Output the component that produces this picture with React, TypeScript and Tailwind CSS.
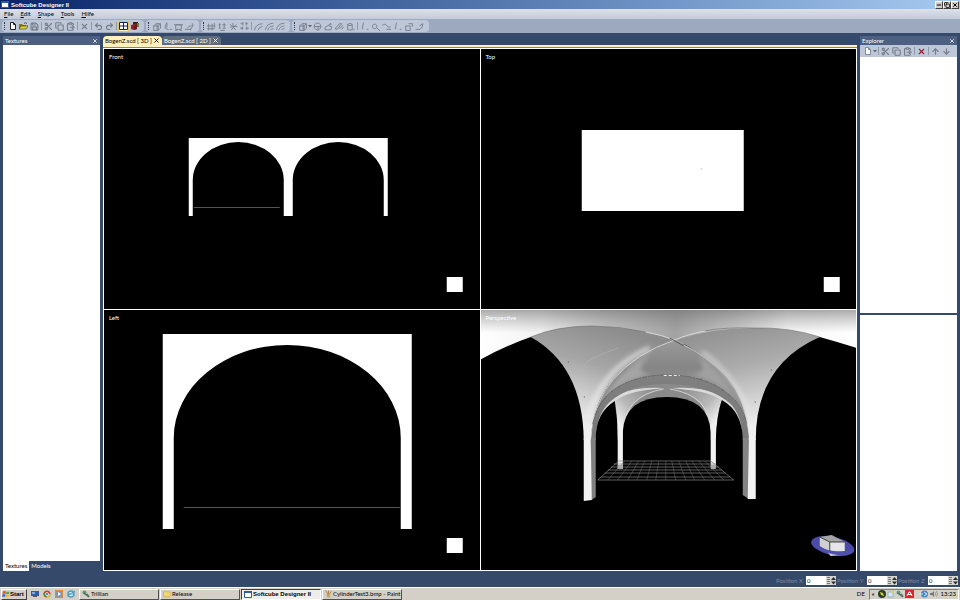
import React, { useState } from 'react';
import { ArrowDown, ArrowUp, ClipboardPaste, Copy, Folder, Minus, Redo2, Save, Scissors, Undo2, X } from 'lucide-react';
import type { LucideIcon } from 'lucide-react';

const glyphs = {
    cube: 'M1.500 3.500h4v4h-4zM1.500 3.500l2-2h4v4l-2 2M5.500 3.500l2-2M4.500 2v5',
    pen: 'M3.500.5L2 3.500v2l3 1.500M3.500 1v4M6 6.500h2',
    frame: 'M1.500 2.500h5v4h-5zM0 2.500h8M1 7.500h2M5 7.500h2',
    sweep: 'M0 6.500h5l2.500-4M2 5.500l2-2h2M6.500 1v2M5 6v1.500',
    snap: 'M1.500 1.500v6M4.500 1.500v6M0 3.500h7.500M0 6h7M6.500 1v4',
    grid: 'M.5 2.500h2M4 2.500h3M1.500 1v4M5.500 1v4M.5 5.500h2M4 5.500h3M2 7.500h4',
    star: 'M1 2l5 5M6.500 2L2 7M3.500 1v3h4M1 4.500h2',
    align: 'M.5 1.500h2M5 1.500h2M2.500 0v3M5.500 0v3M0 5.500h3M5 5.500h3M2 4v3M6 4v3',
    arc: 'M.5 7.500Q1 2 7.500 1.500M3.500 7.500Q4 4.500 7.500 4',
    arcs: 'M.5 7Q1 1.500 7.500 1M2.500 7.500Q3 4 7.500 3.500M5 7Q5 6 7.500 6',
    sphere: 'M4 1a3 3 0 1 0 .1 0M1 4h6M4.500 4v3.500',
    wedge: 'M1 4.500l3-1.500 3 1.500-1 2.500H1zM4 3l2-2v2',
    tube: 'M0 6l4-4.500h2L2 6.500zM4 6l3-3M6 6.500l1.500-2',
    cylinder: 'M1.500 2v5h4V2M1.500 2q2-1.500 4 0M1.500 2.500q2 1.500 4 0M7 6v1.500',
    line: 'M3 .5L2 6.500M6 6.500h1.500',
    lens: 'M2.500 2a2 2 0 1 0 1.500 0zM5 5l2 2M7 7.500h1',
    wave: 'M0 3q3-2 4 0t3.500 1.500M4 6.500h4',
    extrude: 'M1.500 3.500h4v4h-4zM4 1.500h3.500V4',
    bend: 'M.5 6.500h4Q7 5 7 1.500L4 3.500',
};

interface ToolProps {
    label: string;
    icon?: LucideIcon;
    glyph?: keyof typeof glyphs;
    active?: boolean;
    children?: React.ReactNode;
    color?: string;
}

const Tool: React.FC<ToolProps> = ({ label, icon: Icon, glyph, active, children, color = 'text-[#767c8a]' }) => (
    <button
        type="button"
        aria-label={label}
        className={`flex h-[11px] w-[11px] shrink-0 items-center justify-center ${color} ${active ? 'border border-[#e5c365] bg-[#fff3cf]' : ''}`}
    >
        {Icon && <Icon size={9} strokeWidth={3} />}
        {glyph && (
            <svg width="9" height="9" viewBox="0 0 8 8" fill="none" stroke="currentColor" strokeWidth=".8">
                <path d={glyphs[glyph]} />
            </svg>
        )}
        {children}
    </button>
);

const Sep = () => <span className="mx-px h-2 w-px shrink-0 bg-[#8f99ac]" />;

const DropArrow = () => (
    <svg width="4" height="3" viewBox="0 0 4 3" className="shrink-0" aria-hidden="true">
        <path d="M0 0h4L2 2.500z" fill="#5d6472" />
    </svg>
);

const ToolGroup: React.FC<{ label: string; children: React.ReactNode }> = ({ label, children }) => (
    <div role="toolbar" aria-label={label} className="flex h-3 items-center rounded-sm bg-[#bec7d8] pr-1">
        <span className="mx-0.5 h-2 w-0 border-l border-dotted border-[#28344c]" />
        {children}
    </div>
);

const PageIcon = ({ color }: { color: string }) => (
    <svg width="8" height="8" viewBox="0 0 8 8" fill="#fff" stroke={color}>
        <path d="M1.5.5h3l2 2v5h-5zM4.5.5v2h2" />
    </svg>
);

const OpenIcon = () => (
    <svg width="9" height="8" viewBox="0 0 9 8">
        <path d="M0 2h3l1 1h3v4H0z" fill="#8a7d16" />
        <path d="M2 4h7L7 7H0z" fill="#e7d838" stroke="#37340a" strokeWidth=".6" />
        <path d="M5 1.5q1.5-1.5 3 0" fill="none" stroke="#222" strokeWidth=".7" />
    </svg>
);

const FourViewIcon = () => (
    <svg width="9" height="8" viewBox="0 0 9 8" className="shrink-0">
        <path d="M.5.5h8v7h-8zM4.5.5v7M.5 4h8" fill="#fff" stroke="#16205e" />
    </svg>
);

const RenderIcon = () => (
    <svg width="8" height="8" viewBox="0 0 8 8">
        <path d="M2 0h5v5H2z" fill="#3d2322" />
        <path d="M0 3l4-1 2 1v4l-3 1-3-1z" fill="#9c1c28" />
        <path d="M3 4l3-1v4L3 8z" fill="#651820" />
        <path d="M6 1h2v4H6z" fill="#6f7c34" />
    </svg>
);

const WindowIcon = () => (
    <svg width="8" height="7" viewBox="0 0 8 7" className="shrink-0">
        <path d="M.5.5h7v6h-7z" fill="#fff" stroke="#315aa5" />
        <path d="M0 0h8v2H0z" fill="#315aa5" />
    </svg>
);

const PanelHeader = ({ title }: { title: string }) => (
    <div className="flex h-[9px] shrink-0 items-center justify-between bg-[#4d6082] px-0.5 text-white">
        <h2>{title}</h2>
        <button type="button" aria-label={`Close ${title}`}><X size={6} strokeWidth={3} /></button>
    </div>
);

interface ViewProps {
    title: string;
    viewBox: string;
    children: React.ReactNode;
}

const Viewport: React.FC<ViewProps> = ({ title, viewBox, children }) => (
    <section className="relative min-h-0 min-w-0 overflow-hidden bg-black">
        <svg viewBox={viewBox} preserveAspectRatio="xMidYMid slice" className="absolute inset-0 h-full w-full" aria-hidden="true">
            {children}
        </svg>
        <h3 className="absolute left-[5px] top-1 text-white">{title}</h3>
    </section>
);

const VaultScene = () => (
    <>
        <defs>
            <linearGradient id="ceiling" x1="481" x2="856" y1="0" y2="0" gradientUnits="userSpaceOnUse">
                <stop offset="0" stopColor="#ffffff" />
                <stop offset=".16" stopColor="#f2f2f2" />
                <stop offset=".34" stopColor="#c4c4c4" />
                <stop offset=".52" stopColor="#a2a2a2" />
                <stop offset=".68" stopColor="#c8c8c8" />
                <stop offset=".82" stopColor="#f6f6f6" />
                <stop offset="1" stopColor="#ffffff" />
            </linearGradient>
            <linearGradient id="shade" x1="0" x2="0" y1="310" y2="333" gradientUnits="userSpaceOnUse">
                <stop offset="0" stopColor="#666" stopOpacity=".55" />
                <stop offset="1" stopColor="#888" stopOpacity="0" />
            </linearGradient>
            <linearGradient id="vaultL" x1="610" x2="580" y1="326" y2="425" gradientUnits="userSpaceOnUse">
                <stop offset="0" stopColor="#8c8c8c" />
                <stop offset=".4" stopColor="#a6a6a6" />
                <stop offset=".7" stopColor="#cecece" />
                <stop offset="1" stopColor="#f0f0f0" />
            </linearGradient>
            <linearGradient id="vaultR" x1="735" x2="758" y1="326" y2="425" gradientUnits="userSpaceOnUse">
                <stop offset="0" stopColor="#929292" />
                <stop offset=".4" stopColor="#acacac" />
                <stop offset=".7" stopColor="#cecece" />
                <stop offset="1" stopColor="#f0f0f0" />
            </linearGradient>
            <linearGradient id="inner" x1="0" x2="0" y1="340" y2="385" gradientUnits="userSpaceOnUse">
                <stop offset="0" stopColor="#9a9a9a" />
                <stop offset=".6" stopColor="#868686" />
                <stop offset="1" stopColor="#8c8c8c" />
            </linearGradient>
            <linearGradient id="band" x1="0" x2="0" y1="375" y2="430" gradientUnits="userSpaceOnUse">
                <stop offset="0" stopColor="#808080" />
                <stop offset="1" stopColor="#7a7a7a" />
            </linearGradient>
            <linearGradient id="backL" x1="650" x2="616" y1="388" y2="420" gradientUnits="userSpaceOnUse">
                <stop offset="0" stopColor="#8e8e8e" />
                <stop offset=".6" stopColor="#b8b8b8" />
                <stop offset="1" stopColor="#f2f2f2" />
            </linearGradient>
            <linearGradient id="backR" x1="684" x2="718" y1="388" y2="420" gradientUnits="userSpaceOnUse">
                <stop offset="0" stopColor="#8e8e8e" />
                <stop offset=".6" stopColor="#b8b8b8" />
                <stop offset="1" stopColor="#f2f2f2" />
            </linearGradient>
            <filter id="soft" x="-20%" y="-20%" width="140%" height="140%">
                <feGaussianBlur stdDeviation="2" />
            </filter>
        </defs>

        {/* ceiling in front of the first bay */}
        <path d="M480 309H857V348Q838 342 820 337L673 345L531 337Q505 346 480 360Z" fill="url(#ceiling)" />
        <path d="M480 309H857V348Q838 342 820 337L673 345L531 337Q505 346 480 360Z" fill="url(#shade)" />

        {/* middle bay */}
        <path d="M675 340Q636 352 613 380Q592 405 591 440H596L640 402H700L743 440H749Q748 400 727 377Q703 352 675 340Z" fill="url(#inner)" />
        <path d="M650 354Q626 366 612 387Q602 400 596 416Q608 392 626 383Q642 376 655 374Q630 376 650 354Z" fill="#b8b8b8" opacity=".6" filter="url(#soft)" />
        <path d="M698 356Q716 366 727 384Q738 400 745 416Q732 392 714 383Q698 376 685 374Q712 376 698 356Z" fill="#b8b8b8" opacity=".5" filter="url(#soft)" />

        {/* side vaults */}
        <path d="M531 337Q557 326 592 326Q636 327 675 340Q636 354 613 380Q593 402 591 440H584Q583 366 531 337Z" fill="url(#vaultL)" />
        <path d="M820 337Q790 327 753 328Q712 328 677 340Q703 353 727 377Q747 400 749 440H756Q756 365 820 337Z" fill="url(#vaultR)" />
        <path d="M650 348Q622 360 606 381Q593 398 588 420" fill="none" stroke="#ececec" strokeWidth="5" opacity=".65" filter="url(#soft)" />
        <path d="M702 352Q718 362 731 380Q746 398 752 420" fill="none" stroke="#e8e8e8" strokeWidth="5" opacity=".5" filter="url(#soft)" />
        <path d="M578 378Q580 366 592 359Q604 353 618 348" fill="none" stroke="#b8b8b8" opacity=".5" />
        <path d="M531 337Q557 326 592 326Q620 326 646 332M704 331Q726 327 753 328Q790 327 820 337" fill="none" stroke="#6c6c6c" strokeWidth=".6" />
        <path d="M646 332Q662 335 675 340Q688 334 706 331" fill="none" stroke="#d6d6d6" strokeWidth="1" />
        <path d="M675 340Q636 353 613 380Q594 402 591 438" fill="none" stroke="#dedede" strokeWidth=".8" />
        <path d="M670 338L684 346" stroke="#444" strokeWidth=".8" />
        <path d="M684 345Q707 356 727 377Q747 401 749 435" fill="none" stroke="#d0d0d0" strokeWidth=".8" />

        {/* rear bay shell, bright ribs run along its upper edge */}
        <path d="M596 440Q596 423 601 417Q620 386 667 385Q722 386 738 414Q743 425 743 440H711L623 440Z" fill="#8a8a8a" />
        <path d="M596 434Q599 406 617 395Q636 386 664 388Q636 391 618 401Q606 410 598 430Z" fill="#dadada" />
        <path d="M743 434Q740 406 720 395Q701 386 672 388Q703 392 719 401Q733 410 742 430Z" fill="#dadada" />
        <path d="M615 401Q632 389 664 389Q645 393 634 404Q625 414 623 440V467H618V440Q618 415 615 401Z" fill="url(#backL)" />
        <path d="M722 400Q705 389 670 389Q690 393 701 404Q709 414 711 440V467H716V440Q717 415 722 400Z" fill="url(#backR)" />
        <path d="M664 389Q645 392 634 403Q627 411 624 422M670 389Q690 392 701 403Q708 411 711 422" fill="none" stroke="#dcdcdc" strokeWidth=".8" />

        {/* transverse arch between the bays */}
        <path d="M592 440Q592 410 606 396Q628 375 667 375Q712 375 735 400Q748 415 749 440H743Q743 417 732 405Q711 385 667 384Q630 384 610 402Q596 415 596 440Z" fill="url(#band)" />
        <path d="M593 424Q598 404 610 393Q632 375 667 375Q708 375 732 397Q744 408 747 424" fill="none" stroke="#5c5c5c" strokeWidth=".7" strokeDasharray="5 1 2 1" />
        <path d="M664 375.500H680" stroke="#eee" strokeDasharray="3 2" />

        {/* openings */}
        <path d="M596 500V438Q596 413 615 401Q618 420 618 440V468L600 500Z" fill="#000" />
        <path d="M743 496V438Q742 411 722 400Q717 415 716 440V467L740 496Z" fill="#000" />
        <path d="M623 470V432Q625 397 667 397Q709 397 711 432V470Z" fill="#000" />
        <path d="M618 425H623V469H618ZM711 425H716V467H711Z" fill="#f2f2f2" />

        {/* ground grid */}
        <path d="M619 461H711L734 480H598ZM614 464H716M611 467H719M608 470H722M605 473H726M601 477H730" fill="none" stroke="#858585" strokeWidth=".7" />
        <path d="M625 461L608 480M632 461L618 480M639 461L628 480M645 461L637 480M652 461L647 480M659 461L656 480M666 461V480M672 461L676 480M679 461L686 480M686 461L695 480M692 461L705 480M699 461L715 480M705 461L724 480" stroke="#707070" strokeWidth=".5" />
        <path d="M618 465H623V469H618ZM711 465H716V469H711Z" fill="#aaa" />

        {/* front pillars */}
        <path d="M591 438H596V497L592 500H591Z" fill="#808080" />
        <path d="M584 438H591L592 500L584 501Z" fill="#f2f2f2" />
        <path d="M743 438H749V499L743 495Z" fill="#838383" />
        <path d="M749 438H756V499H748Z" fill="#f2f2f2" />
        <path d="M568 362h1M584 397h1M771 370h1M755 402h1M701 379h1" stroke="#444" />

        {/* orientation gizmo */}
        <ellipse cx="833" cy="546" rx="22" ry="9" transform="rotate(12 833 546)" fill="#4a4aa8" />
        <path d="M824 548L845 550L842 555L831 556Z" fill="#d6d6e2" />
        <path d="M820 537L832 535L845 542L830 544Z" fill="#a5a5a5" />
        <path d="M820 537L830 542V552L820 546Z" fill="#cfcfcf" />
        <path d="M830 542L845 542V551L830 552Z" fill="#e5e5e5" />
        <path d="M820 537L830 542V552M830 542L845 542" fill="none" stroke="#222" strokeWidth=".8" />
        <path d="M812 541Q820 549 834 551Q848 552 854 549Q852 557 838 555Q817 552 812 541Z" fill="#5050ae" />
    </>
);

const TaskButton: React.FC<{ label: string; active?: boolean; children: React.ReactNode }> = ({ label, active, children }) => (
    <button
        type="button"
        className={`flex h-[11px] w-20 items-center gap-px border px-0.5 text-left ${
            active
                ? "border-b-white border-l-[#404040] border-r-white border-t-[#404040] bg-[#f0eeea] font-['Liberation_Sans',sans-serif] font-bold"
                : 'border-b-[#505050] border-l-white border-r-[#505050] border-t-white bg-[#d4d0c8]'
        }`}
    >
        {children}
        <span className="whitespace-nowrap">{label}</span>
    </button>
);

const PositionField = ({ axis }: { axis: string }) => {
    const [value, setValue] = useState('0');
    return (
        <div className="flex items-center">
            <label htmlFor={`position-${axis}`} className="w-[30px] whitespace-nowrap text-[#7d8aa3]">Position {axis}</label>
            <input
                id={`position-${axis}`}
                value={value}
                onChange={(e) => setValue(e.target.value)}
                className="h-[9px] w-5 bg-white px-px text-[#222] outline-none"
            />
            <svg width="10" height="9" viewBox="0 0 10 9" aria-hidden="true">
                <path d="M0 0h10v9H0z" fill="#d8d6d0" />
                <path d="M1 1.500h3M1 3.500h3M1 5.500h3M1 7.500h3" stroke="#777" />
                <path d="M5 4l2.500-3L10 4zM5 5.500h5l-2.500 3z" fill="#2b2b2b" />
            </svg>
        </div>
    );
};

const menus = ['File', 'Edit', 'Shape', 'Tools', 'Hilfe'];
const documents = ['BogenZ.scd [ 3D ]', 'BogenZ.scd [ 2D ]'];

export default function App() {
    const [activeDoc, setActiveDoc] = useState(0);
    const [activePanel, setActivePanel] = useState('Textures');

    return (
        <div className="flex h-screen flex-col overflow-hidden bg-[#35496a] font-['Lato','Liberation_Sans',sans-serif] text-[6px] leading-[8px] text-black">
            <header className="flex h-[9px] shrink-0 items-center gap-0.5 bg-gradient-to-r from-[#0a246a] to-[#a6caf0] px-px">
                <WindowIcon />
                <h1 className="font-['Liberation_Sans',sans-serif] font-bold text-white">Softcube Designer II</h1>
                <div className="ml-auto flex">
                    {['Minimize', 'Restore', 'Close'].map((name) => (
                        <button key={name} type="button" aria-label={name} className="flex h-2 w-2 items-center justify-center border border-b-[#404040] border-l-white border-r-[#404040] border-t-white bg-[#d4d0c8]">
                            {name === 'Minimize' && <Minus size={6} strokeWidth={4} />}
                            {name === 'Restore' && <Copy size={6} strokeWidth={3} />}
                            {name === 'Close' && <X size={6} strokeWidth={4} />}
                        </button>
                    ))}
                </div>
            </header>

            <nav className="flex h-[10px] shrink-0 items-center gap-[7px] bg-gradient-to-b from-[#dde1ea] to-[#c3cad9] px-1">
                {menus.map((menu) => (
                    <button key={menu} type="button"><u>{menu[0]}</u>{menu.slice(1)}</button>
                ))}
            </nav>

            <div className="flex h-[14px] shrink-0 items-center gap-0.5 bg-[#9ca9bf] px-0.5">
                <ToolGroup label="Standard">
                    <Tool label="New"><PageIcon color="#222" /></Tool>
                    <Tool label="Open"><OpenIcon /></Tool>
                    <Tool label="Save" icon={Save} />
                    <Sep />
                    <Tool label="Cut" icon={Scissors} />
                    <Tool label="Copy" icon={Copy} />
                    <Tool label="Paste" icon={ClipboardPaste} />
                    <Sep />
                    <Tool label="Delete" icon={X} />
                    <Sep />
                    <Tool label="Undo" icon={Undo2} />
                    <Tool label="Redo" icon={Redo2} />
                    <Sep />
                    <Tool label="Four views" active><FourViewIcon /></Tool>
                    <Tool label="Render"><RenderIcon /></Tool>
                </ToolGroup>
                <ToolGroup label="Transform">
                    <Tool label="Solid" glyph="cube" />
                    <Tool label="Profile" glyph="pen" />
                    <Tool label="Frame" glyph="frame" />
                    <Tool label="Surface" glyph="sweep" />
                </ToolGroup>
                <ToolGroup label="Arrange">
                    <Tool label="Snap" glyph="snap" />
                    <Tool label="Grid" glyph="grid" />
                    <Tool label="Points" glyph="star" />
                    <Tool label="Align" glyph="align" />
                    <Sep />
                    <Tool label="Arc" glyph="arc" />
                    <Tool label="Double arc" glyph="arcs" />
                    <Tool label="Vault" glyph="arcs" />
                </ToolGroup>
                <ToolGroup label="Shapes">
                    <Tool label="Box" glyph="cube" />
                    <DropArrow />
                    <Tool label="Sphere" glyph="sphere" />
                    <Tool label="Wedge" glyph="wedge" />
                    <Tool label="Sweep" glyph="tube" />
                    <Tool label="Cylinder" glyph="cylinder" />
                    <Sep />
                    <Tool label="Line" glyph="line" />
                    <Tool label="Curve" glyph="lens" />
                    <Tool label="Wave" glyph="wave" />
                    <Tool label="Segment" glyph="line" />
                    <Tool label="Extrude" glyph="extrude" />
                    <Tool label="Bend" glyph="bend" />
                </ToolGroup>
            </div>

            <main className="flex min-h-0 flex-1 gap-[3px] px-[3px] pb-[3px] pt-[3px]">
                <aside className="flex w-[97px] shrink-0 flex-col">
                    <PanelHeader title="Textures" />
                    <div className="flex-1 bg-white" />
                    <div className="flex h-[10px] shrink-0">
                        {['Textures', 'Models'].map((panel) => (
                            <button
                                key={panel}
                                type="button"
                                onClick={() => setActivePanel(panel)}
                                className={`px-0.5 ${activePanel === panel ? 'bg-white text-black' : 'text-white'}`}
                            >
                                {panel}
                            </button>
                        ))}
                    </div>
                </aside>

                <div className="flex min-w-0 flex-1 flex-col">
                    <div className="flex h-[9px] shrink-0">
                        {documents.map((doc, i) => (
                            <div
                                key={doc}
                                className={`flex w-[59px] items-center justify-between rounded-t-sm px-0.5 ${
                                    i === activeDoc ? 'bg-[#fff0bd] text-black' : 'bg-[#5f6c7c] text-white'
                                }`}
                            >
                                <button type="button" onClick={() => setActiveDoc(i)} className="whitespace-nowrap">{doc}</button>
                                <button type="button" aria-label={`Close ${doc}`}><X size={7} strokeWidth={3} /></button>
                            </div>
                        ))}
                    </div>
                    <div className="h-[3px] shrink-0 border-b border-[#8b8a5c] bg-[#fff0bd]" />
                    <div className="grid min-h-0 flex-1 grid-cols-2 grid-rows-2 gap-px bg-white p-px">
                        <Viewport title="Front" viewBox="104 49 376 260">
                            <path d="M189 138H388V216H384V180A45.500 38 0 0 0 293 180V216H284V180A45.500 38 0 0 0 193 180V216H189Z" fill="#fff" />
                            <path d="M194 207.500H280" stroke="#555" />
                            <path d="M447 277h16v15h-16z" fill="#fff" />
                        </Viewport>
                        <Viewport title="Top" viewBox="481 49 376 260">
                            <path d="M582 130H744V211H582Z" fill="#fff" />
                            <path d="M701 169h1" stroke="#999" />
                            <path d="M824 277h16v15h-16z" fill="#fff" />
                        </Viewport>
                        <Viewport title="Left" viewBox="104 310 376 260">
                            <path d="M163 334H412V529H401V438A113.500 93 0 0 0 174 438V529H163Z" fill="#fff" />
                            <path d="M184 507.500H400" stroke="#555" />
                            <path d="M447 538h16v15h-16z" fill="#fff" />
                        </Viewport>
                        <Viewport title="Perspective" viewBox="481 310 376 260">
                            <VaultScene />
                        </Viewport>
                    </div>
                </div>

                <aside className="flex w-[97px] shrink-0 flex-col">
                    <PanelHeader title="Explorer" />
                    <div className="flex h-3 shrink-0 items-center bg-[#bec7d8] pl-0.5">
                        <Tool label="New item"><PageIcon color="#858b98" /></Tool>
                        <DropArrow />
                        <Sep />
                        <Tool label="Cut item" icon={Scissors} />
                        <Tool label="Copy item" icon={Copy} />
                        <Tool label="Paste item" icon={ClipboardPaste} />
                        <Sep />
                        <Tool label="Delete item" icon={X} color="text-[#941c2e]" />
                        <Sep />
                        <Tool label="Move up" icon={ArrowUp} />
                        <Tool label="Move down" icon={ArrowDown} />
                    </div>
                    <div className="flex min-h-0 flex-1 flex-col gap-0.5">
                        <div className="flex-1 bg-white" />
                        <div className="flex-1 bg-white" />
                    </div>
                </aside>
            </main>

            <div className="flex h-[13px] shrink-0 items-center justify-end gap-px px-0.5">
                <PositionField axis="X" />
                <PositionField axis="Y" />
                <PositionField axis="Z" />
            </div>

            <footer className="flex h-[13px] shrink-0 items-center gap-0.5 border-t border-white bg-[#d4d0c8] px-px">
                <button type="button" className="flex h-[11px] w-[26px] items-center border border-b-[#404040] border-l-white border-r-[#404040] border-t-white font-['Liberation_Sans',sans-serif] font-bold">
                    <svg width="8" height="8" viewBox="0 0 8 8">
                        <path d="M1 1.500Q2 .5 4 1.500L3.500 4Q2 3 .5 4z" fill="#e2502c" />
                        <path d="M4.500 1.500Q6 2 7.500 1.500L7 4Q5.500 4.500 4 4z" fill="#5da839" />
                        <path d="M.5 4.500Q2 3.500 3.500 4.500L3 7Q1.500 6 0 7z" fill="#3e6ac2" />
                        <path d="M4 4.500Q5.500 5 7 4.500L6.500 7Q5 7.500 3.500 7z" fill="#edbf2b" />
                    </svg>
                    Start
                </button>
                <div className="flex w-12 items-center justify-around">
                    <svg width="8" height="8" viewBox="0 0 8 8"><path d="M0 1h8v5H0z" fill="#2e5cae" /><path d="M1 2h3v2H1z" fill="#7da9e4" /><path d="M2 6h4v1H2z" fill="#555" /></svg>
                    <svg width="8" height="8" viewBox="0 0 8 8"><circle cx="4" cy="4" r="3.500" fill="#d93c2c" /><path d="M4 4L.9 2.400A3.500 3.500 0 0 0 3.500 7.500z" fill="#38984b" /><path d="M4 4h3.500A3.500 3.500 0 0 1 3.500 7.500z" fill="#eec62c" /><circle cx="4" cy="4" r="1.600" fill="#4383dc" stroke="#fff" strokeWidth=".6" /></svg>
                    <svg width="8" height="8" viewBox="0 0 8 8"><path d="M0 0h8v8H0z" fill="#e28a35" /><circle cx="4" cy="4" r="3" fill="#5ea0d8" /><path d="M3 2l3 2-3 2z" fill="#fff" /></svg>
                    <svg width="8" height="8" viewBox="0 0 8 8"><circle cx="4" cy="4" r="3" fill="#d9edf6" stroke="#4b9fc6" strokeWidth="1.500" /><path d="M2 4h4M0 6L8 1" stroke="#4b9fc6" /></svg>
                </div>
                <div className="flex gap-px">
                    <TaskButton label="Trillian">
                        <svg width="8" height="8" viewBox="0 0 8 8"><circle cx="2.500" cy="2.500" r="2" fill="#6b927c" /><path d="M2 3L7 7M5 4l2 3" stroke="#48725b" strokeWidth="1.500" /></svg>
                    </TaskButton>
                    <TaskButton label="Release"><Folder size={8} fill="#f0d976" color="#c9a942" /></TaskButton>
                    <TaskButton label="Softcube Designer II" active><WindowIcon /></TaskButton>
                    <TaskButton label="CylinderTest3.bmp - Paint">
                        <svg width="7" height="8" viewBox="0 0 8 8" className="shrink-0"><path d="M2 4h4v4H2z" fill="#c9a468" /><path d="M1 0l2 4M4 0v4M7 1L5 4" stroke="#b1762f" /></svg>
                    </TaskButton>
                </div>
                <span className="ml-auto mr-0.5">DE</span>
                <div className="flex h-[11px] items-center gap-px border border-b-white border-l-[#808080] border-r-white border-t-[#808080] px-0.5">
                    <button type="button" aria-label="Show hidden icons" className="mr-0.5 font-bold">«</button>
                    <svg width="8" height="8" viewBox="0 0 8 8"><circle cx="4" cy="4" r="4" fill="#28402a" /><path d="M2 2l3 1 1 3-3-1z" fill="#d2cb35" /></svg>
                    <svg width="8" height="8" viewBox="0 0 8 8"><path d="M1 2h5v5H1z" fill="#dceaf0" stroke="#8db6bf" /><path d="M4 0h3v3H4z" fill="#d9cb82" /></svg>
                    <svg width="8" height="8" viewBox="0 0 8 8"><circle cx="2.500" cy="2.500" r="2" fill="#6b927c" /><path d="M2 3L7 7M5 4l2 3" stroke="#48725b" strokeWidth="1.500" /></svg>
                    <svg width="9" height="8" viewBox="0 0 9 8"><path d="M0 0h9v8H0z" fill="#d92632" /><path d="M2 6l2-4h1l2 4M3 4.500h4" fill="none" stroke="#fff" /></svg>
                    <svg width="10" height="8" viewBox="0 0 10 8" className="ml-1"><circle cx="5.500" cy="4" r="3.500" fill="#3c88c9" /><path d="M0 4h4M5 2l3 2-3 2" stroke="#d9eefc" fill="none" /></svg>
                    <svg width="8" height="8" viewBox="0 0 8 8"><path d="M0 3h2l2-2v6L2 5H0z" fill="#777" /><path d="M5 2q1.500 2 0 4M6.500 1q2 3 0 6" fill="none" stroke="#888" strokeWidth=".7" /></svg>
                    <time className="ml-0.5">13:23</time>
                </div>
            </footer>
        </div>
    );
}
